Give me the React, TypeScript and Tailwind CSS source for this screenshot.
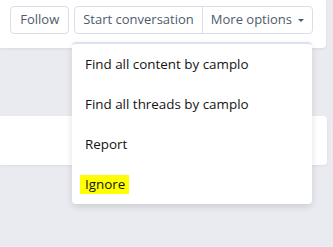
import React from "react";

const items = ["Find all content by camplo", "Find all threads by camplo", "Report", "Ignore"];

export default function App() {
  return (
    <div className="relative h-[247px] w-[333px] overflow-hidden bg-[#e9ebf0] font-['Segoe_UI','Open_Sans',sans-serif]">
      {/* member header card */}
      <div className="flex h-[48px] w-[326px] items-start justify-end gap-[5px] rounded-br-[4px] bg-white pr-[13px] pt-[6px] shadow-[0_1px_3px_rgba(0,0,0,0.08)]">
        <button className="h-[28px] rounded-[4px] border border-[#d8dfe9] px-[9px] text-[13px] text-[#4f5b6d]">
          Follow
        </button>
        <div className="flex h-[28px] rounded-[4px] border border-[#d8dfe9] text-[13px] text-[#4f5b6d]">
          <button className="border-r border-[#d8dfe9] px-[8px]">Start conversation</button>
          <button className="flex items-center gap-[6px] px-[8px]">
            More options
            <span className="h-0 w-0 border-x-[3px] border-t-[3px] border-x-transparent border-t-[#4f5b6d]" />
          </button>
        </div>
      </div>

      <div className="mt-[68px] h-[49px] w-[327px] rounded-r-[4px] bg-white shadow-[0_1px_3px_rgba(0,0,0,0.06)]" />

      {/* dropdown menu */}
      <div className="absolute left-[72px] top-[42px] w-[240px] rounded-[4px] border-t-[2px] border-[#dbe3ef] bg-white shadow-[0_3px_7px_rgba(0,0,0,0.12)]">
        {items.map((label) => (
          <div key={label} className="flex h-[40px] items-center pl-[13px] text-[13.4px] text-[#141414]">
            {label === "Ignore" ? (
              <span className="-ml-[5px] bg-[#ffff00] pl-[5px] pr-[4px] leading-[19px]">{label}</span>
            ) : (
              label
            )}
          </div>
        ))}
      </div>
    </div>
  );
}
